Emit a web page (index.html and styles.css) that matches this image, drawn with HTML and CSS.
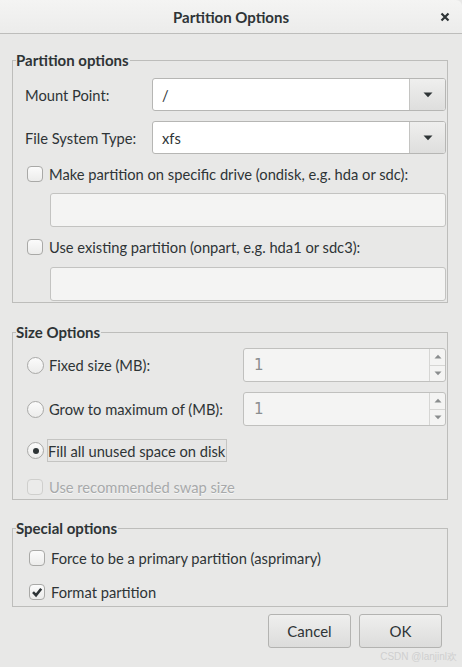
FILE: index.html
```html
<!DOCTYPE html>
<html>
<head>
<meta charset="utf-8">
<link rel="stylesheet" href="styles.css">
</head>
<body>
<div class="titlebar">
  <span class="title">Partition Options</span>
  <span class="close"><svg width="10" height="10" viewBox="0 0 10 10"><path d="M1.5 1.5 L8.5 8.5 M8.5 1.5 L1.5 8.5" stroke="#2e3436" stroke-width="2.2" fill="none"/></svg></span>
</div>
<div class="content">
  <fieldset class="frame f1">
    <legend>Partition options</legend>
    <div class="body">
      <div class="formrow">
        <span class="label">Mount Point:</span>
        <div class="combo"><span class="combo-text">/</span><span class="combo-btn"><svg width="10" height="6" viewBox="0 0 10 6"><path d="M0.5 0.5 H9.5 L5 5.2 Z" fill="#2e3436"/></svg></span></div>
      </div>
      <div class="formrow r2">
        <span class="label">File System Type:</span>
        <div class="combo"><span class="combo-text">xfs</span><span class="combo-btn"><svg width="10" height="6" viewBox="0 0 10 6"><path d="M0.5 0.5 H9.5 L5 5.2 Z" fill="#2e3436"/></svg></span></div>
      </div>
      <label class="check c1"><span class="box"></span>Make partition on specific drive (ondisk, e.g. hda or sdc):</label>
      <div class="entry e1"></div>
      <label class="check c2"><span class="box"></span>Use existing partition (onpart, e.g. hda1 or sdc3):</label>
      <div class="entry e2"></div>
    </div>
  </fieldset>

  <fieldset class="frame f2">
    <legend>Size Options</legend>
    <div class="body">
      <div class="sizerow s1">
        <label class="radio"><span class="dot"></span>Fixed size (MB):</label>
        <div class="spin"><span class="spin-text">1</span><span class="spin-btns"><span class="sb"><svg width="8" height="5" viewBox="0 0 8 5"><path d="M0.5 4.5 H7.5 L4 0.8 Z" fill="#8a8d8e"/></svg></span><span class="sb"><svg width="8" height="5" viewBox="0 0 8 5"><path d="M0.5 0.5 H7.5 L4 4.2 Z" fill="#8a8d8e"/></svg></span></span></div>
      </div>
      <div class="sizerow s2">
        <label class="radio"><span class="dot"></span>Grow to maximum of (MB):</label>
        <div class="spin"><span class="spin-text">1</span><span class="spin-btns"><span class="sb"><svg width="8" height="5" viewBox="0 0 8 5"><path d="M0.5 4.5 H7.5 L4 0.8 Z" fill="#8a8d8e"/></svg></span><span class="sb"><svg width="8" height="5" viewBox="0 0 8 5"><path d="M0.5 0.5 H7.5 L4 4.2 Z" fill="#8a8d8e"/></svg></span></span></div>
      </div>
      <label class="radio fill"><span class="dot on"></span><span class="focus">Fill all unused space on disk</span></label>
      <label class="check disabled"><span class="box"></span>Use recommended swap size</label>
    </div>
  </fieldset>

  <fieldset class="frame f3">
    <legend>Special options</legend>
    <div class="body">
      <label class="check c3"><span class="box"></span>Force to be a primary partition (asprimary)</label>
      <label class="check c4"><span class="box checked"><svg width="14" height="14" viewBox="0 0 14 14"><path d="M3 7.2 L6 10.2 L11.2 3.8" stroke="#2e3436" stroke-width="2.6" fill="none"/></svg></span>Format partition</label>
    </div>
  </fieldset>

  <div class="buttons">
    <button class="btn">Cancel</button>
    <button class="btn">OK</button>
  </div>
  <div class="watermark">CSDN @lanjinl欢</div>
</div>
</body>
</html>
```

FILE: styles.css
```css
* { box-sizing: border-box; }
html, body { margin: 0; padding: 0; }
body {
  width: 462px;
  height: 667px;
  overflow: hidden;
  background: #e8e8e7;
  font-family: "Lato", "Noto Sans", sans-serif;
  font-size: 14.7px;
  color: #2e3436;
}
.titlebar {
  height: 34px;
  background: linear-gradient(#f4f4f3, #ececeb);
  border-bottom: 1px solid #bdbdbb;
  border-top-right-radius: 6px;
  display: flex;
  align-items: center;
  justify-content: center;
  position: relative;
}
.title { font-weight: bold; font-size: 15px; }
.close { position: absolute; right: 12px; top: 12px; width: 10px; height: 10px; display: flex; }
.content { padding: 0 14px 0 12px; }
.frame {
  margin: 0;
  padding: 0;
  border: 1px solid #bdbdbb;
  min-width: 0;
}
.frame legend {
  margin-left: 3px;
  padding: 0 1px 0 0;
  font-weight: bold;
  font-size: 15px;
  line-height: 20px;
  height: 20px;
}
.f1 { margin-top: 16px; }
.f1 .body { padding: 8px 1px 1px 12px; display: flex; flex-direction: column; }
.formrow { display: flex; align-items: center; height: 33px; }
.formrow.r2 { margin-top: 10px; }
.label { width: 127px; flex: none; }
.combo {
  flex: 1;
  height: 33px;
  display: flex;
  background: #fff;
  border: 1px solid #b6b6b4;
  border-radius: 3px;
}
.combo-text { flex: 1; display: flex; align-items: center; padding-left: 9px; }
.combo-btn {
  width: 36px;
  display: flex;
  align-items: center;
  justify-content: center;
  border-left: 1px solid #c4c4c2;
  background: linear-gradient(#efefee, #dededd);
  border-radius: 0 2px 2px 0;
}
.check, .radio { display: flex; align-items: center; height: 20px; }
.box {
  width: 16px; height: 16px;
  border: 1px solid #a9a9a7;
  border-radius: 4px;
  background: linear-gradient(#fbfbfb, #ececeb);
  margin-right: 6px;
  flex: none;
  display: flex; align-items: center; justify-content: center;
}
.box svg { display: block; }
.c1, .c2 { margin-left: 2px; }
.c1 { margin-top: 10px; }
.entry {
  height: 34px;
  margin-left: 25px;
  background: #f4f4f3;
  border: 1px solid #c3c3c1;
  border-radius: 3px;
}
.e1 { margin-top: 9px; }
.c2 { margin-top: 10px; }
.e2 { margin-top: 10px; }

.f2 { margin-top: 19px; }
.f2 .body { padding: 6px 1px 2px 14px; display: flex; flex-direction: column; }
.sizerow { display: flex; align-items: center; justify-content: space-between; height: 34px; }
.s2 { margin-top: 10px; }
.dot {
  width: 17px; height: 17px;
  border: 1px solid #a9a9a7;
  border-radius: 50%;
  background: linear-gradient(#fbfbfb, #ececeb);
  margin-right: 5px;
  flex: none;
  display: flex; align-items: center; justify-content: center;
}
.dot.on::after {
  content: "";
  width: 6px; height: 6px;
  border-radius: 50%;
  background: #2e3436;
}
.spin {
  width: 203px;
  height: 34px;
  display: flex;
  background: #f4f4f3;
  border: 1px solid #c0c0be;
  border-radius: 3px;
}
.spin-text { flex: 1; display: flex; align-items: center; padding-left: 10px; color: #8b8e8f; font-family: "DejaVu Sans", sans-serif; font-size: 15px; }
.spin-btns { width: 16px; display: flex; flex-direction: column; border-left: 1px solid #d6d6d4; }
.sb { flex: 1; display: flex; align-items: center; justify-content: center; }
.sb + .sb { border-top: 1px solid #d6d6d4; }
.fill { height: 23px; margin-top: 13px; }
.focus {
  height: 23px;
  display: flex; align-items: center;
  border: 1px solid #c4c4c2;
  background: #e6e6e5;
  padding: 0 1px 0 0;
  margin-left: -2px;
}
.disabled { margin-top: 15px; color: #a7a9aa; text-shadow: 0 1px #f6f6f6; }
.disabled .box { border-color: #cfcfcd; background: #ebebea; }

.f3 { margin-top: 18px; }
.f3 .body { padding: 10px 1px 4px 16px; display: flex; flex-direction: column; }
.c4 { margin-top: 14px; }
.checked { background: linear-gradient(#fbfbfb, #ececeb); }

.buttons {
  display: flex;
  justify-content: flex-end;
  gap: 8px;
  margin-top: 7px;
  padding-right: 6px;
}
.btn {
  width: 83px;
  height: 34px;
  font-family: inherit;
  font-size: 15px;
  color: #2e3436;
  border: 1px solid #b3b3b1;
  border-radius: 3px;
  background: linear-gradient(#efefee, #dcdcdb);
  padding: 0;
}
.watermark {
  text-align: right;
  margin-right: -9px;
  margin-top: 2px;
  font-family: "Liberation Sans", sans-serif;
  font-size: 10px;
  color: #cfcfcf;
}
```
